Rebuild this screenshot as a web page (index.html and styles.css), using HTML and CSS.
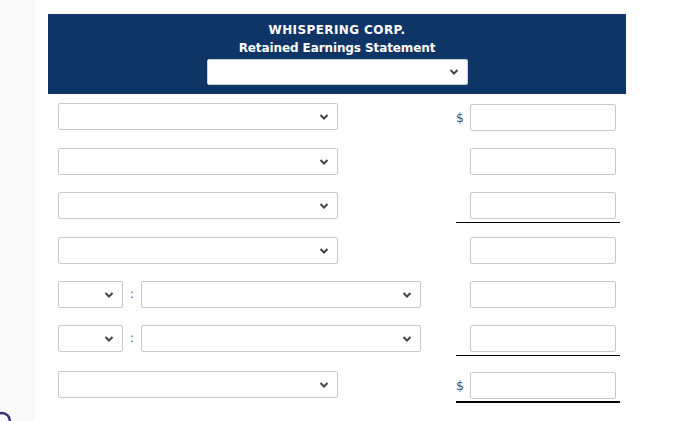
FILE: index.html
```
<!DOCTYPE html>
<html lang="en">
<head>
<meta charset="utf-8">
<title>Retained Earnings Statement</title>
<link rel="stylesheet" href="styles.css">
</head>
<body>
<div class="page">
  <aside class="side"></aside>
  <main class="main">
    <header class="head">
      <div class="title title-co">WHISPERING CORP.</div>
      <div class="title">Retained Earnings Statement</div>
      <div class="sel sel-head"><svg class="chev" viewBox="0 0 9 6"><path d="M1 1 L4.5 4.5 L8 1"/></svg></div>
    </header>
    <section class="rows">
      <div class="row">
        <div class="sel sel-wide"><svg class="chev" viewBox="0 0 9 6"><path d="M1 1 L4.5 4.5 L8 1"/></svg></div>
        <div class="amt"><span class="dollar">$</span><div class="inp"></div></div>
      </div>
      <div class="row">
        <div class="sel sel-wide"><svg class="chev" viewBox="0 0 9 6"><path d="M1 1 L4.5 4.5 L8 1"/></svg></div>
        <div class="amt"><span class="dollar"></span><div class="inp"></div></div>
      </div>
      <div class="row">
        <div class="sel sel-wide"><svg class="chev" viewBox="0 0 9 6"><path d="M1 1 L4.5 4.5 L8 1"/></svg></div>
        <div class="amt ul"><span class="dollar"></span><div class="inp"></div></div>
      </div>
      <div class="row">
        <div class="sel sel-wide"><svg class="chev" viewBox="0 0 9 6"><path d="M1 1 L4.5 4.5 L8 1"/></svg></div>
        <div class="amt"><span class="dollar"></span><div class="inp"></div></div>
      </div>
      <div class="row">
        <div class="sel sel-small"><svg class="chev" viewBox="0 0 9 6"><path d="M1 1 L4.5 4.5 L8 1"/></svg></div>
        <span class="colon">:</span>
        <div class="sel sel-wide"><svg class="chev" viewBox="0 0 9 6"><path d="M1 1 L4.5 4.5 L8 1"/></svg></div>
        <div class="amt"><span class="dollar"></span><div class="inp"></div></div>
      </div>
      <div class="row">
        <div class="sel sel-small"><svg class="chev" viewBox="0 0 9 6"><path d="M1 1 L4.5 4.5 L8 1"/></svg></div>
        <span class="colon">:</span>
        <div class="sel sel-wide"><svg class="chev" viewBox="0 0 9 6"><path d="M1 1 L4.5 4.5 L8 1"/></svg></div>
        <div class="amt ul"><span class="dollar"></span><div class="inp"></div></div>
      </div>
      <div class="row row-total">
        <div class="sel sel-wide"><svg class="chev" viewBox="0 0 9 6"><path d="M1 1 L4.5 4.5 L8 1"/></svg></div>
        <div class="amt ul2"><span class="dollar">$</span><div class="inp"></div></div>
      </div>
    </section>
  </main>
</div>
<svg class="bubble" viewBox="0 0 20 20"><circle cx="2" cy="20" r="8"/></svg>
</body>
</html>
```
FILE: styles.css
```
html, body {
  margin: 0;
  padding: 0;
  background: #ffffff;
  font-family: "DejaVu Sans", Verdana, sans-serif;
}

.page {
  display: flex;
  width: 700px;
  height: 421px;
  overflow: hidden;
}

.side {
  width: 35px;
  flex: none;
  background: #f9f9f9;
}

.main {
  margin-left: 13px;
  width: 578px;
  padding-top: 14px;
}

.head {
  background: #0f3566;
  padding: 7px 0 9px;
  display: flex;
  flex-direction: column;
  align-items: center;
}

.title {
  color: #ffffff;
  font-weight: bold;
  font-size: 12px;
  line-height: 18px;
  letter-spacing: -0.1px;
}

.title-co {
  letter-spacing: 0.4px;
}

.sel {
  box-sizing: border-box;
  height: 27px;
  background: #ffffff;
  border: 1px solid #c8c8c8;
  border-radius: 2px;
  display: flex;
  align-items: center;
  justify-content: flex-end;
  padding-right: 8px;
  flex: none;
}

.sel-head {
  width: 261px;
  height: 26px;
  margin-top: 2px;
  border-color: #d0d0d0;
}

.chev {
  width: 10px;
  height: 6px;
}

.chev path {
  fill: none;
  stroke: #444444;
  stroke-width: 2;
}

.rows {
  padding: 0 6px 0 10px;
}

.row {
  display: flex;
  align-items: flex-start;
  padding: 9px 0 5px;
}

.row-total {
  padding-top: 10px;
}

.sel-wide {
  width: 280px;
}

.sel-small {
  width: 65px;
}

.colon {
  width: 18px;
  flex: none;
  text-align: center;
  font-size: 12px;
  line-height: 27px;
  color: #6b5a4a;
}

.amt {
  margin-left: auto;
  width: 164px;
  display: flex;
  align-items: center;
  padding-bottom: 3px;
}

.amt.ul {
  border-bottom: 1px solid #000000;
}

.amt.ul2 {
  padding-bottom: 2px;
  border-bottom: 2px solid #000000;
}

.dollar {
  width: 14px;
  flex: none;
  font-size: 12.5px;
  color: #505050;
  line-height: 27px;
  padding-top: 1px;
}

.inp {
  box-sizing: border-box;
  width: 146px;
  height: 27px;
  border: 1px solid #c8c8c8;
  border-radius: 2px;
  background: #ffffff;
}

.bubble {
  position: absolute;
  left: 0;
  top: 401px;
  width: 20px;
  height: 20px;
}

.bubble circle {
  fill: none;
  stroke: #3b2f7a;
  stroke-width: 2.5;
}
```
